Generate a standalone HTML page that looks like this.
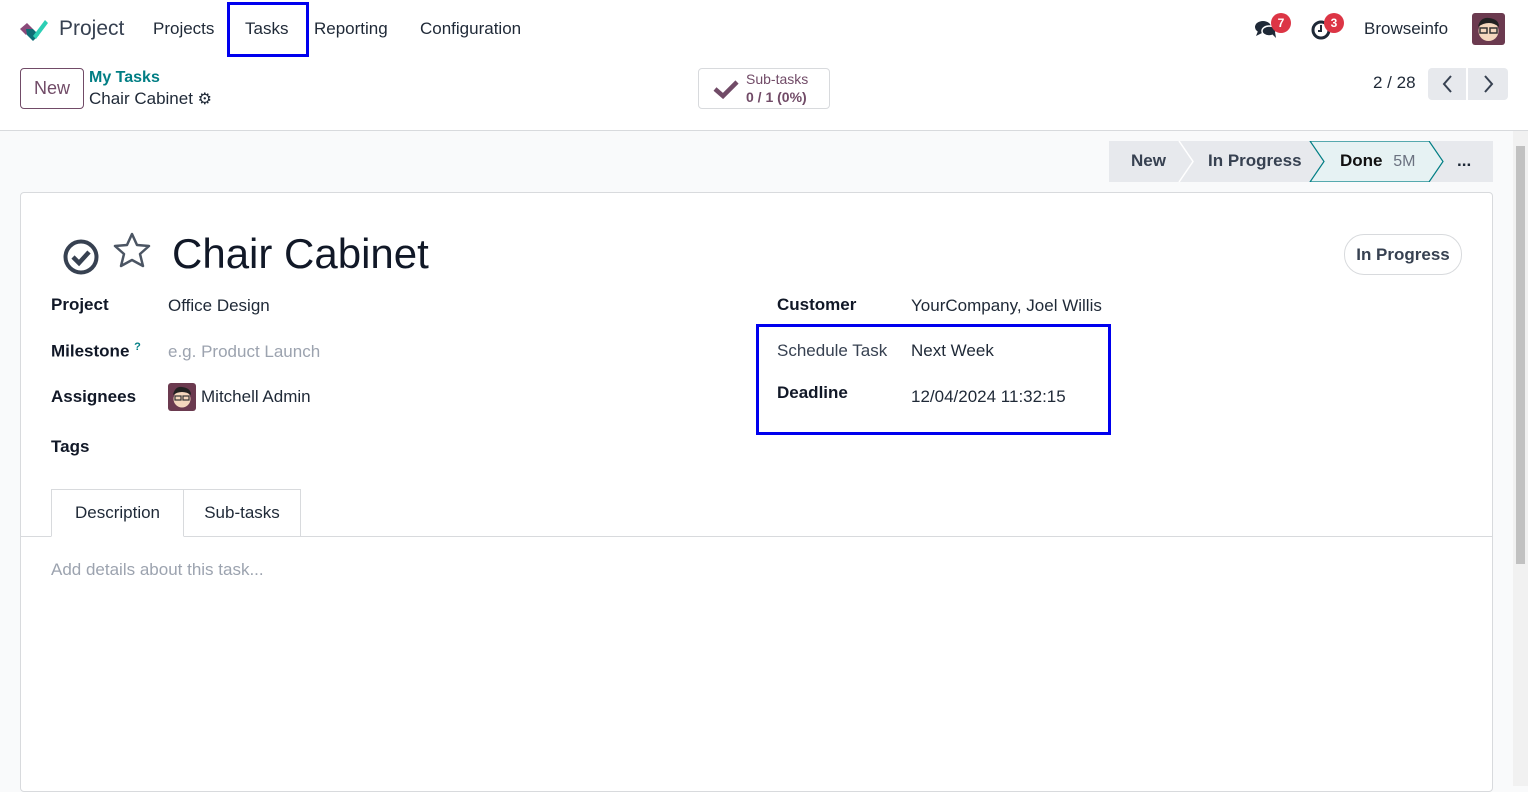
<!DOCTYPE html>
<html><head><meta charset="utf-8"><style>
*{box-sizing:border-box;margin:0;padding:0}
body{width:1528px;height:786px;overflow:hidden;font-family:"Liberation Sans","DejaVu Sans",sans-serif;color:#1f2937;background:#f9fafb;position:relative;font-size:17px}
.a{position:absolute;white-space:nowrap}
.top{position:absolute;left:0;top:0;width:1528px;height:131px;background:#fff;border-bottom:1px solid #d8dadd}
.lbl{font-weight:bold;color:#111827}
.av{display:inline-block;background:#6b3a4f;border-radius:3px}
</style></head><body>
<div class="top"></div>
<svg class="a" style="left:18px;top:16px" width="30" height="26" viewBox="0 0 30 26"><path d="M2 13l7-6 6 6-7 6z" fill="#8b4a7a"/><path d="M9 19l-1-6 7 0 6 6-6 6z" fill="#0e6e76"/><path d="M15 20L27 4l3 3-12 16z" fill="#2ccfb5"/></svg>
<div class="a" style="left:59px;top:17px;font-size:21px;color:#374151">Project</div>
<div class="a" style="left:153px;top:19px">Projects</div>
<div class="a" style="left:245px;top:19px">Tasks</div>
<div class="a" style="left:227px;top:2px;width:82px;height:55px;border:3px solid #0000ee"></div>
<div class="a" style="left:314px;top:19px">Reporting</div>
<div class="a" style="left:420px;top:19px">Configuration</div>
<svg class="a" style="left:1254px;top:19px" width="24" height="20" viewBox="0 0 24 20"><ellipse cx="9" cy="8" rx="8" ry="6" fill="#1f2937"/><path d="M4 12l-2 5 6-3z" fill="#1f2937"/><ellipse cx="15" cy="12" rx="7" ry="5" fill="#1f2937" stroke="#fff" stroke-width="1.5"/><path d="M18 15l4 4-1-6z" fill="#1f2937"/></svg>
<div class="a" style="left:1271px;top:13px;width:20px;height:20px;border-radius:10px;background:#dc3545;color:#fff;font-size:12px;text-align:center;line-height:20px;font-weight:bold">7</div>
<svg class="a" style="left:1310px;top:19px" width="22" height="22" viewBox="0 0 22 22"><circle cx="11" cy="11" r="8" fill="none" stroke="#1f2937" stroke-width="3"/><path d="M11 6v6h-3" fill="none" stroke="#1f2937" stroke-width="2"/></svg>
<div class="a" style="left:1324px;top:13px;width:20px;height:20px;border-radius:10px;background:#dc3545;color:#fff;font-size:12px;text-align:center;line-height:20px;font-weight:bold">3</div>
<div class="a" style="left:1364px;top:19px">Browseinfo</div>
<div class="a av" style="left:1472px;top:13px;width:33px;height:32px"><svg width="33" height="32"><circle cx="16.5" cy="18" r="10" fill="#f4d7bd"/><path d="M6 14q2-10 11-9 10 1 10 9-5-4-10-4-6 0-11 4z" fill="#222"/><rect x="8" y="15" width="7" height="5" fill="none" stroke="#333" stroke-width="1.5"/><rect x="18" y="15" width="7" height="5" fill="none" stroke="#333" stroke-width="1.5"/></svg></div>
<div class="a" style="left:20px;top:68px;width:64px;height:41px;border:1px solid #714b67;border-radius:4px;color:#714b67;font-size:18px;text-align:center;line-height:39px">New</div>
<div class="a" style="left:89px;top:69px;color:#017e84;font-weight:bold;font-size:16px">My Tasks</div>
<div class="a" style="left:89px;top:89px">Chair Cabinet <span style="font-size:16px">⚙</span></div>
<div class="a" style="left:698px;top:68px;width:132px;height:41px;border:1px solid #d8dadd;border-radius:4px;background:#fff"></div>
<svg class="a" style="left:713px;top:79px" width="26" height="20" viewBox="0 0 26 20"><path d="M2 10l8 7L24 3" fill="none" stroke="#714b67" stroke-width="4.5"/></svg>
<div class="a" style="left:746px;top:71px;font-size:14px;color:#714b67">Sub-tasks</div>
<div class="a" style="left:746px;top:89px;font-size:14px;color:#714b67;font-weight:bold">0 / 1 (0%)</div>
<div class="a" style="left:1373px;top:73px">2 / 28</div>
<div class="a" style="left:1428px;top:68px;width:38px;height:32px;background:#e7e9ed;border-radius:4px 0 0 4px"><svg width="38" height="32"><path d="M23 8l-7 8 7 8" fill="none" stroke="#374151" stroke-width="2"/></svg></div>
<div class="a" style="left:1468px;top:68px;width:40px;height:32px;background:#e7e9ed;border-radius:0 4px 4px 0"><svg width="40" height="32"><path d="M17 8l7 8-7 8" fill="none" stroke="#374151" stroke-width="2"/></svg></div>
<div class="a" style="left:1109px;top:141px;width:384px;height:41px;background:#e7e9ed"></div>
<svg class="a" style="left:1109px;top:141px" width="384" height="41"><path d="M70 0l14 20.5L70 41" fill="none" stroke="#fff" stroke-width="1.5"/><path d="M201 0h119l14 20.5L320 41H201l14-20.5z" fill="#e6f2f3" stroke="#017e84" stroke-width="1.2"/></svg>
<div class="a" style="left:1131px;top:151px;font-weight:bold;color:#374151">New</div>
<div class="a" style="left:1208px;top:151px;font-weight:bold;color:#374151">In Progress</div>
<div class="a" style="left:1340px;top:151px;font-weight:bold;color:#111">Done <span style="font-weight:normal;color:#6b7280;font-size:16px;margin-left:6px">5M</span></div>
<div class="a" style="left:1457px;top:151px;font-weight:bold">...</div>
<div class="a" style="left:20px;top:192px;width:1473px;height:600px;background:#fff;border:1px solid #d8dadd;border-radius:4px"></div>
<svg class="a" style="left:62px;top:238px" width="38" height="38" viewBox="0 0 38 38"><circle cx="19" cy="19" r="15.5" fill="none" stroke="#374151" stroke-width="4"/><path d="M11 19l6 6 10-11" fill="none" stroke="#374151" stroke-width="4.5"/></svg>
<svg class="a" style="left:111px;top:231px" width="42" height="40" viewBox="0 0 42 40"><path d="M21 3l5 11 12 1-9 8 3 12-11-6-11 6 3-12-9-8 12-1z" fill="none" stroke="#4b5563" stroke-width="2.5" stroke-linejoin="round"/></svg>
<div class="a" style="left:172px;top:230px;font-size:42px;color:#111827">Chair Cabinet</div>
<div class="a" style="left:1344px;top:234px;width:118px;height:41px;border:1px solid #d8dadd;border-radius:20px;text-align:center;line-height:39px;font-weight:bold;color:#374151">In Progress</div>
<div class="a lbl" style="left:51px;top:295px">Project</div>
<div class="a" style="left:168px;top:296px">Office Design</div>
<div class="a lbl" style="left:51px;top:341px">Milestone <sup style="color:#017e84;font-size:11px">?</sup></div>
<div class="a" style="left:168px;top:342px;color:#9ca3af">e.g. Product Launch</div>
<div class="a lbl" style="left:51px;top:387px">Assignees</div>
<div class="a av" style="left:168px;top:383px;width:28px;height:28px"><svg width="28" height="28"><circle cx="14" cy="16" r="8.5" fill="#f4d7bd"/><path d="M5 12q2-9 9-8 9 1 9 8-4-3-9-3-5 0-9 3z" fill="#222"/><rect x="7" y="13" width="6" height="4" fill="none" stroke="#333" stroke-width="1.2"/><rect x="15" y="13" width="6" height="4" fill="none" stroke="#333" stroke-width="1.2"/></svg></div>
<div class="a" style="left:201px;top:387px">Mitchell Admin</div>
<div class="a lbl" style="left:51px;top:437px">Tags</div>
<div class="a lbl" style="left:777px;top:295px">Customer</div>
<div class="a" style="left:911px;top:296px">YourCompany, Joel Willis</div>
<div class="a" style="left:756px;top:324px;width:355px;height:111px;border:3px solid #0000ee"></div>
<div class="a" style="left:777px;top:341px;color:#374151">Schedule Task</div>
<div class="a" style="left:911px;top:341px">Next Week</div>
<div class="a lbl" style="left:777px;top:383px">Deadline</div>
<div class="a" style="left:911px;top:387px">12/04/2024 11:32:15</div>
<div class="a" style="left:21px;top:536px;width:1471px;height:1px;background:#d8dadd"></div>
<div class="a" style="left:51px;top:489px;width:133px;height:48px;border:1px solid #d8dadd;border-bottom:1px solid #fff;background:#fff;text-align:center;line-height:46px">Description</div>
<div class="a" style="left:184px;top:489px;width:117px;height:48px;border:1px solid #d8dadd;border-left:none;border-bottom:none;text-align:center;line-height:46px">Sub-tasks</div>
<div class="a" style="left:51px;top:560px;color:#9ca3af">Add details about this task...</div>
<div class="a" style="left:1513px;top:131px;width:15px;height:655px;background:#f1f1f1"></div>
<div class="a" style="left:1516px;top:146px;width:9px;height:418px;background:#c1c1c1"></div>
</body></html>
